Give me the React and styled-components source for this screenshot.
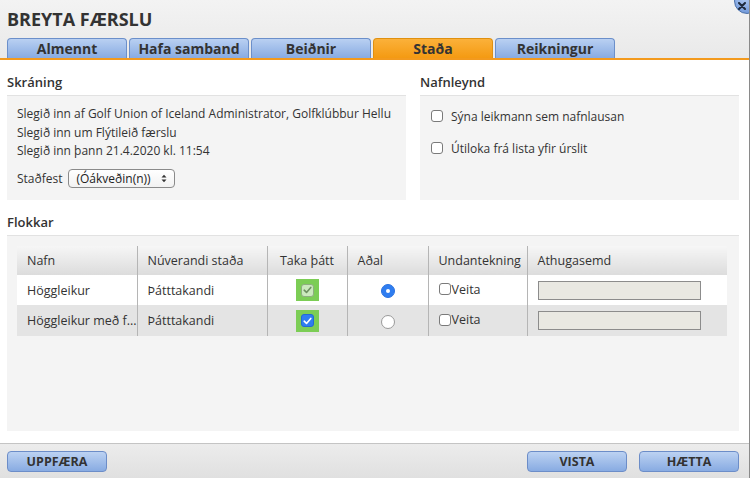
import React from "react";
import styled, { createGlobalStyle } from "styled-components";

const Global = createGlobalStyle`
  html, body { margin: 0; padding: 0; background: #fff; }
  body { font-family: "Open Sans", "Liberation Sans", sans-serif; color: #333; }
  * { box-sizing: border-box; }
`;

const Dialog = styled.div`
  position: relative;
  width: 750px;
  height: 478px;
  border-right: 1px solid #8a8a8a;
  display: flex;
  flex-direction: column;
  overflow: hidden;
  background: #fff;
`;

const Header = styled.div`
  background: linear-gradient(#f3f3f3, #e9e9e9);
  border-bottom: 2px solid #f39a1e;
  padding: 0 0 0 7px;
  display: flex;
  flex-direction: column;
`;

const Title = styled.h1`
  margin: 0;
  height: 38px;
  display: flex;
  align-items: center;
  font-size: 18px;
  font-weight: 700;
  color: #333;
`;

const Tabs = styled.div`
  display: flex;
  gap: 2px;
  height: 20px;
`;

const Tab = styled.div`
  width: 120px;
  height: 20px;
  border: 1px solid ${p => (p.$active ? "#e0900f" : "#6b8fca")};
  border-bottom: none;
  border-radius: 4px 4px 0 0;
  background: ${p =>
    p.$active
      ? "linear-gradient(#fbb13a, #f49a12)"
      : "linear-gradient(#b9d0f2, #88abe2)"};
  font-size: 14px;
  font-weight: 700;
  color: #333;
  display: flex;
  align-items: center;
  justify-content: center;
  line-height: 1;
  padding-top: 1px;
`;

const Close = styled.div`
  position: absolute;
  right: -11px;
  top: -12px;
  width: 26px;
  height: 26px;
  border-radius: 50%;
  background: radial-gradient(circle at 40% 35%, #b3ccf2, #5c88d2);
  border: 1px solid #4a6fa8;
  display: flex;
  align-items: center;
  justify-content: center;
  padding: 10px 10px 0 0;
`;

const Content = styled.div`
  flex: 1;
  padding: 0 10px 0 7px;
  display: flex;
  flex-direction: column;
`;

const TopRow = styled.div`
  display: grid;
  grid-template-columns: 399px 1fr;
  gap: 14px;
`;

const Section = styled.section`
  display: flex;
  flex-direction: column;
`;

const SectionTitle = styled.h2`
  margin: 0;
  height: 36px;
  padding-top: 12px;
  font-size: 13px;
  font-weight: 600;
  color: #333;
  line-height: 20px;
  border-bottom: 1px solid #e2e2e2;
`;

const Box = styled.div`
  background: #f4f4f4;
  height: ${p => p.$h}px;
  padding: ${p => p.$pad};
  font-size: 12px;
`;

const Line = styled.div`
  line-height: 18.5px;
  color: #333;
`;

const ConfirmRow = styled.div`
  display: flex;
  align-items: center;
  gap: 5px;
  margin-top: 8px;
`;

const Select = styled.div`
  width: 107px;
  height: 19px;
  border: 1px solid #8a8a8a;
  border-radius: 4px;
  background: linear-gradient(#ffffff, #f2f2f2);
  display: flex;
  align-items: center;
  justify-content: space-between;
  padding: 0 7px 0 8px;
  font-size: 12px;
  color: #222;
`;

const CheckRow = styled.label`
  display: flex;
  align-items: center;
  gap: 8px;
  font-size: 12px;
  color: #333;
  height: 32px;
`;

const Box12 = styled.span`
  width: 12px;
  height: 12px;
  border: 1px solid #7a7a7a;
  border-radius: 3px;
  background: #fff;
  display: inline-block;
  flex: none;
`;

const Table = styled.table`
  width: 710px;
  table-layout: fixed;
  border-collapse: collapse;
  font-size: 12px;
  color: #333;
`;

const Th = styled.th`
  height: 29px;
  text-align: ${p => p.$align || "left"};
  padding: 0 10px;
  font-weight: 400;
  font-size: 12.5px;
  background: linear-gradient(#f6f6f6, #dcdcdc);
  border-left: ${p => (p.$first ? "none" : "1px solid #b5b5b5")};
  white-space: nowrap;
`;

const Tr = styled.tr`
  background: ${p => (p.$alt ? "#e4e4e4" : "#fff")};
`;

const Td = styled.td`
  height: ${p => p.$h || 30}px;
  padding: 0 ${p => (p.$tight ? 0 : 10)}px;
  text-align: ${p => p.$align || "left"};
  border-left: ${p => (p.$first ? "none" : "1px solid #b5b5b5")};
  white-space: nowrap;
  overflow: hidden;
  font-size: 12.5px;
  vertical-align: middle;
`;

const GreenCell = styled.span`
  display: inline-flex;
  width: 23px;
  height: 22px;
  background: #7ccd55;
  align-items: center;
  justify-content: center;
  vertical-align: middle;
`;

const MiniCheck = styled.span`
  width: 13px;
  height: 13px;
  border-radius: 3px;
  display: inline-flex;
  align-items: center;
  justify-content: center;
  background: ${p => (p.$on ? "#2f7df0" : "#cbe9bd")};
  border: 1px solid ${p => (p.$on ? "#2369d4" : "#8eae80")};
`;

const Radio = styled.span`
  display: inline-flex;
  width: 14px;
  height: 14px;
  border-radius: 50%;
  align-items: center;
  justify-content: center;
  background: ${p => (p.$on ? "#2f7df0" : "#fff")};
  border: 1px solid ${p => (p.$on ? "#2a72e0" : "#9a9a9a")};
  vertical-align: middle;
  &::after {
    content: "";
    width: 4px;
    height: 4px;
    border-radius: 50%;
    background: ${p => (p.$on ? "#fff" : "transparent")};
  }
`;

const Veita = styled.span`
  display: inline-flex;
  align-items: center;
  gap: 1px;
  font-size: 12.5px;
`;

const NoteInput = styled.span`
  display: inline-block;
  width: 163px;
  height: 19px;
  background: #e9e8e2;
  border: 1px solid #8c8c8c;
  vertical-align: middle;
`;

const Footer = styled.div`
  height: 35px;
  margin-top: 11px;
  border-top: 1px solid #c4c4c4;
  background: linear-gradient(#ececec, #e0e0e0);
  display: flex;
  align-items: center;
  padding: 0 10px 0 7px;
  gap: 12px;
`;

const Spacer = styled.div`
  flex: 1;
`;

const Button = styled.button`
  width: 100px;
  height: 21px;
  border: 1px solid #6c8dc8;
  border-radius: 4px;
  background: linear-gradient(#bcd2f2, #88abe2);
  font-family: "Open Sans", "Liberation Sans", sans-serif;
  font-weight: 700;
  font-size: 12.5px;
  color: #333;
  padding: 0;
  display: flex;
  align-items: center;
  justify-content: center;
`;

const Tick = ({ color }) => (
  <svg width="9" height="8" viewBox="0 0 9 8">
    <path d="M1.2 4.2 L3.5 6.4 L7.8 1.4" fill="none" stroke={color} strokeWidth="1.6" strokeLinecap="round" strokeLinejoin="round" />
  </svg>
);

const cols = [120, 130, 80, 81, 99, 200];

const rows = [
  { name: "Höggleikur", status: "Þátttakandi", on: false, main: true },
  { name: "Höggleikur með f...", status: "Þátttakandi", on: true, main: false },
];

export default function App() {
  return (
    <>
      <Global />
      <Dialog>
        <Header>
          <Title>BREYTA FÆRSLU</Title>
          <Tabs>
            <Tab>Almennt</Tab>
            <Tab>Hafa samband</Tab>
            <Tab>Beiðnir</Tab>
            <Tab $active>Staða</Tab>
            <Tab>Reikningur</Tab>
          </Tabs>
        </Header>
        <Close>
          <svg width="8" height="8" viewBox="0 0 8 8">
            <path d="M1 1 L7 7 M7 1 L1 7" stroke="#1e2a3c" strokeWidth="2" strokeLinecap="round" />
          </svg>
        </Close>
        <Content>
          <TopRow>
            <Section>
              <SectionTitle>Skráning</SectionTitle>
              <Box $h={104} $pad="9px 10px">
                <Line>Slegið inn af Golf Union of Iceland Administrator, Golfklúbbur Hellu</Line>
                <Line>Slegið inn um Flýtileið færslu</Line>
                <Line>Slegið inn þann 21.4.2020 kl. 11:54</Line>
                <ConfirmRow>
                  <span>Staðfest</span>
                  <Select>
                    <span>(Óákveðin(n))</span>
                    <svg width="6" height="9" viewBox="0 0 6 9">
                      <path d="M0.5 3.5 L3 0.8 L5.5 3.5 Z M0.5 5.5 L3 8.2 L5.5 5.5 Z" fill="#333" />
                    </svg>
                  </Select>
                </ConfirmRow>
              </Box>
            </Section>
            <Section>
              <SectionTitle>Nafnleynd</SectionTitle>
              <Box $h={104} $pad="4px 11px">
                <CheckRow><Box12 />Sýna leikmann sem nafnlausan</CheckRow>
                <CheckRow><Box12 />Útiloka frá lista yfir úrslit</CheckRow>
              </Box>
            </Section>
          </TopRow>
          <Section>
            <SectionTitle>Flokkar</SectionTitle>
            <Box $h={195} $pad="10px 10px">
              <Table>
                <colgroup>
                  {cols.map((w, i) => <col key={i} style={{ width: w }} />)}
                </colgroup>
                <thead>
                  <tr>
                    <Th $first>Nafn</Th>
                    <Th>Núverandi staða</Th>
                    <Th $align="center">Taka þátt</Th>
                    <Th>Aðal</Th>
                    <Th>Undantekning</Th>
                    <Th>Athugasemd</Th>
                  </tr>
                </thead>
                <tbody>
                  {rows.map((r, i) => (
                    <Tr key={i} $alt={i === 1}>
                      <Td $first $h={i === 1 ? 31 : 30}>{r.name}</Td>
                      <Td>{r.status}</Td>
                      <Td $align="center" $tight>
                        <GreenCell>
                          <MiniCheck $on={r.on}>
                            <Tick color={r.on ? "#fff" : "#6d8f60"} />
                          </MiniCheck>
                        </GreenCell>
                      </Td>
                      <Td $align="center" $tight><Radio $on={r.main} /></Td>
                      <Td><Veita><Box12 />Veita</Veita></Td>
                      <Td><NoteInput /></Td>
                    </Tr>
                  ))}
                </tbody>
              </Table>
            </Box>
          </Section>
        </Content>
        <Footer>
          <Button>UPPFÆRA</Button>
          <Spacer />
          <Button>VISTA</Button>
          <Button>HÆTTA</Button>
        </Footer>
      </Dialog>
    </>
  );
}
